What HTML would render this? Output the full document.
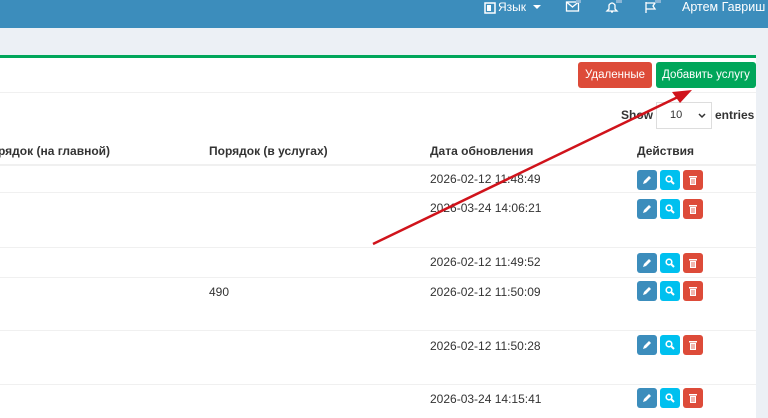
<!DOCTYPE html><html><head><meta charset="utf-8"><style>
body{margin:0;width:768px;height:406px;overflow:hidden;background:#ecf0f5;font-family:"Liberation Sans",sans-serif;font-size:12px;color:#333;position:relative}
.top{position:absolute;left:0;top:0;width:768px;height:28px;background:#3c8dbc;color:#fff}
.box{position:absolute;left:0;top:55px;width:756px;height:360px;background:#fff;border-top:3px solid #00a65a}
.a{position:absolute;white-space:nowrap}
.btn{position:absolute;color:#fff;border-radius:3px;font-size:11.5px;text-align:center;line-height:26px}
.line{position:absolute;left:0;width:756px;height:1px;background:#f0f0f0}
.ib{position:absolute;width:20px;height:20px;border-radius:3px}
.ib svg{position:absolute;left:5px;top:5px}
b{font-weight:bold}
</style></head><body>
<div class="top">
<svg class="a" style="left:484px;top:2px" width="12" height="12"><rect x="1" y="1" width="10" height="10" fill="none" stroke="#fff" stroke-width="1.5"/><rect x="3" y="3" width="4" height="6" fill="#fff"/></svg>
<span class="a" style="left:498px;top:0;font-size:12px">Язык</span>
<svg class="a" style="left:533px;top:5px" width="8" height="5"><polygon points="0,0 8,0 4,4" fill="#fff"/></svg>
<svg class="a" style="left:565px;top:0px" width="16" height="14"><rect x="1.5" y="2" width="12" height="9" fill="none" stroke="#fff" stroke-width="1.3"/><polyline points="1.5,2 7.5,7 13.5,2" fill="none" stroke="#fff" stroke-width="1.3"/><rect x="11" y="0" width="5" height="3" fill="#8ab6d6"/></svg>
<svg class="a" style="left:604px;top:0px" width="18" height="14"><path d="M3 11 L5 9 L5 5 Q8 1 11 5 L11 9 L13 11 Z M7 12 L9 12" fill="none" stroke="#fff" stroke-width="1.3"/><rect x="12" y="0" width="6" height="3" fill="#8ab6d6"/></svg>
<svg class="a" style="left:643px;top:0px" width="18" height="14"><path d="M3 13 L3 2 M3 3 L12 3 L10 6 L12 9 L3 9" fill="none" stroke="#fff" stroke-width="1.3"/><rect x="12" y="0" width="6" height="3" fill="#8ab6d6"/></svg>
<span class="a" style="left:682px;top:0;font-size:12.5px">Артем Гавриш</span>
</div>
<div class="box"></div>
<div class="line" style="top:92px"></div>
<div class="btn" style="left:578px;top:62px;width:74px;background:#dd4b39">Удаленные</div>
<div class="btn" style="left:656px;top:62px;width:100px;background:#00a65a">Добавить услугу</div>
<span class="a" style="left:621px;top:108px"><b>Show</b></span>
<div class="a" style="left:656px;top:102px;width:54px;height:25px;border:1px solid #ddd;font-size:11px;line-height:25px;text-indent:13px">10<svg style="position:absolute;right:5px;top:10px" width="8" height="6"><polyline points="1,1 4,4 7,1" fill="none" stroke="#333" stroke-width="1.5"/></svg></div>
<span class="a" style="left:715px;top:108px"><b>entries</b></span>
<span class="a" style="left:-2px;top:144px"><b>рядок (на главной)</b></span>
<span class="a" style="left:209px;top:144px"><b>Порядок (в услугах)</b></span>
<span class="a" style="left:430px;top:144px"><b>Дата обновления</b></span>
<span class="a" style="left:637px;top:144px"><b>Действия</b></span>
<div class="line" style="top:164px;height:2px"></div>
<div class="line" style="top:192px"></div>
<div class="line" style="top:247px"></div>
<div class="line" style="top:277px"></div>
<div class="line" style="top:330px"></div>
<div class="line" style="top:384px"></div>
<span class="a" style="left:430px;top:172px">2026-02-12 11:48:49</span>
<span class="a" style="left:430px;top:201px">2026-03-24 14:06:21</span>
<span class="a" style="left:430px;top:255px">2026-02-12 11:49:52</span>
<span class="a" style="left:209px;top:285px">490</span>
<span class="a" style="left:430px;top:285px">2026-02-12 11:50:09</span>
<span class="a" style="left:430px;top:339px">2026-02-12 11:50:28</span>
<span class="a" style="left:430px;top:392px">2026-03-24 14:15:41</span>
<script>
[170,199,253,281,335,388].forEach(y=>{
document.write('<div class="ib" style="left:637px;top:'+y+'px;background:#3c8dbc"><svg width="10" height="10"><path d="M1 9 L2 6 L7 1 L9 3 L4 8 Z" fill="#fff"/></svg></div>'+
'<div class="ib" style="left:660px;top:'+y+'px;background:#00c0ef"><svg width="10" height="10"><circle cx="4" cy="4" r="2.8" fill="none" stroke="#fff" stroke-width="1.6"/><line x1="6" y1="6" x2="9" y2="9" stroke="#fff" stroke-width="2"/></svg></div>'+
'<div class="ib" style="left:683px;top:'+y+'px;background:#dd4b39"><svg width="10" height="10"><rect x="1" y="1" width="8" height="1.5" fill="#fff"/><rect x="2" y="3" width="6" height="7" fill="#fff"/><rect x="3.6" y="4" width="0.8" height="5" fill="#dd4b39"/><rect x="5.6" y="4" width="0.8" height="5" fill="#dd4b39"/></svg></div>');
});
</script>
<svg class="a" style="left:0;top:0" width="768" height="406"><line x1="373" y1="244" x2="680" y2="96" stroke="#d0131b" stroke-width="2.5"/><polygon points="692,90 672,92 680,103" fill="#d0131b"/></svg>
</body></html>
